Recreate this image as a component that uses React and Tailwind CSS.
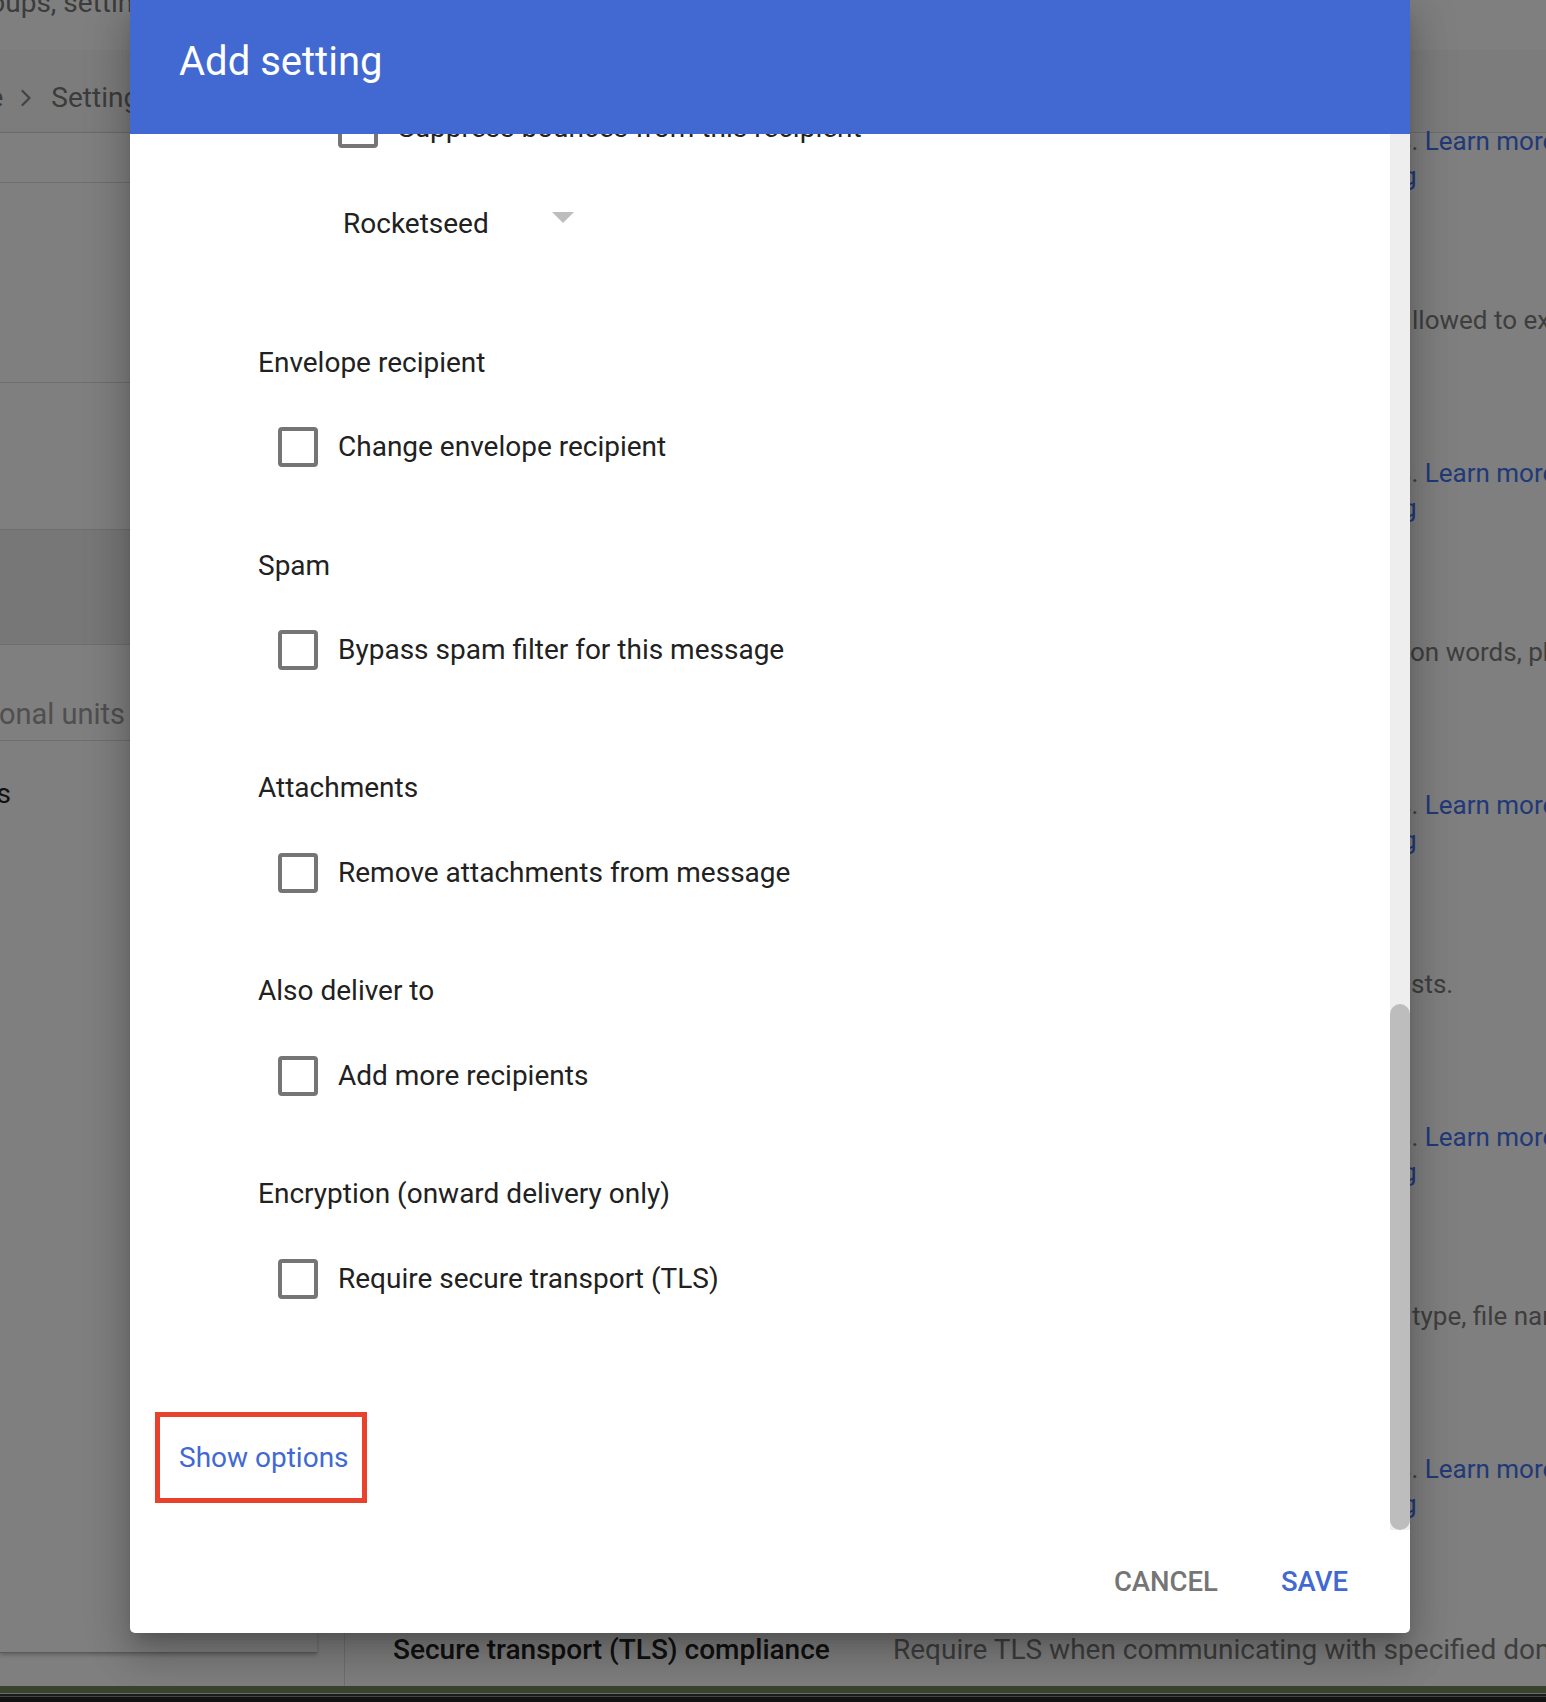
import React from 'react';
import { ChevronRight } from 'lucide-react';

// Sections of the "Add setting" dialog, below the routing dropdown
const sections = [
  { title: 'Envelope recipient', label: 'Change envelope recipient', titleGap: 'mt-[99px]', rowGap: 'mt-[44px]' },
  { title: 'Spam', label: 'Bypass spam filter for this message', titleGap: 'mt-[79px]', rowGap: 'mt-[44px]' },
  { title: 'Attachments', label: 'Remove attachments from message', titleGap: 'mt-[98px]', rowGap: 'mt-[45px]' },
  { title: 'Also deliver to', label: 'Add more recipients', titleGap: 'mt-[78px]', rowGap: 'mt-[45px]' },
  { title: 'Encryption (onward delivery only)', label: 'Require secure transport (TLS)', titleGap: 'mt-[78px]', rowGap: 'mt-[45px]' },
];

// Fragments of the settings list that peek out right of the dialog
const rightFragments = [
  { desc: 'llowed to exchange', descClass: 'ml-[2px]' },
  { desc: 'on words, phrases', descClass: 'ml-0' },
  { desc: 'sts.', descClass: 'ml-[1px]' },
  { desc: 'type, file name', descClass: 'ml-[2px]' },
  { desc: null, descClass: '' },
];

function Checkbox() {
  return <span className="w-10 h-10 shrink-0 rounded-[4px] border-4 border-[#757575] bg-white" />;
}

function CheckRow({ label, className }) {
  return (
    <div className={`h-10 flex items-center gap-5 ${className}`}>
      <Checkbox />
      <span className="text-[28px] leading-10 text-[#212121] whitespace-nowrap">{label}</span>
    </div>
  );
}

function Sidebar() {
  return (
    <div className="w-[345px] shrink-0 border-r border-[#dedede]">
      <div className="w-[317px] h-[1520px] bg-white border-b border-[#b5b5b5] shadow-[0_2px_4px_rgba(0,0,0,0.25)] flex flex-col">
        <div className="h-[50px] border-b border-[#dcdcdc]" />
        <div className="h-[200px] border-b border-[#dcdcdc]" />
        <div className="h-[147px] border-b border-[#dcdcdc]" />
        <div className="h-[115px] border-b border-[#dcdcdc] bg-[#efefef]" />
        <div className="h-[96px] border-b border-[#dcdcdc] flex items-end pb-[8px]">
          <div className="w-[125px] flex justify-end">
            <span className="text-[29px] leading-9 text-[#9e9e9e] whitespace-nowrap">Organizational units</span>
          </div>
        </div>
        <div className="pt-[35px]">
          <div className="w-[11px] flex justify-end">
            <span className="text-[28px] leading-9 text-[#222222] whitespace-nowrap">Apps</span>
          </div>
        </div>
      </div>
    </div>
  );
}

function MainList() {
  return (
    <div className="flex-1 min-w-0 flex flex-col">
      <div className="h-[1499px] shrink-0 flex">
        <div className="flex-1" />
        <div className="w-[136px] shrink-0 flex flex-col -mt-[9px] text-[26px] leading-[35px] whitespace-nowrap">
          {rightFragments.map((f, i) => (
            <div key={i} className="h-[332px] shrink-0 flex flex-col">
              <div className="text-[#4272f0]">
                <span className="-ml-[12px] text-[#7c7c7c]">s.</span> Learn more
              </div>
              <div className="text-[#4272f0]">
                <span className="-ml-[8px]">g</span>
              </div>
              {f.desc && <div className={`mt-[109px] text-[#7c7c7c] ${f.descClass}`}>{f.desc}</div>}
            </div>
          ))}
        </div>
      </div>
      <div className="h-9 shrink-0 flex items-center text-[28px] leading-9 whitespace-nowrap">
        <span className="ml-[48px] w-[500px] shrink-0 font-medium text-[#222222]">Secure transport (TLS) compliance</span>
        <span className="text-[#7c7c7c]">Require TLS when communicating with specified domains.</span>
      </div>
    </div>
  );
}

function BackgroundPage() {
  return (
    <div className="flex flex-col h-full">
      <div className="h-[50px] shrink-0">
        <div className="-mt-[17px] -ml-[39px] text-[28px] leading-10 text-[#787878] whitespace-nowrap">
          Groups, settings and devices
        </div>
      </div>
      <div className="h-[83px] shrink-0 border-b border-[#dcdcdc] bg-[#f8f8f8] pt-[28px]">
        <div className="h-10 flex items-center text-[28px] text-[#787878] whitespace-nowrap">
          <span className="-ml-[72px]">Home</span>
          <ChevronRight size={28} strokeWidth={2} className="ml-[9px] text-[#888888]" />
          <span className="ml-[11px]">Settings for Gmail</span>
        </div>
      </div>
      <div className="flex flex-1 min-h-0">
        <Sidebar />
        <MainList />
      </div>
    </div>
  );
}

function AddSettingDialog() {
  return (
    <div className="absolute left-[130px] top-0 w-[1280px] h-[1633px] bg-white rounded-b-[5px] overflow-hidden flex flex-col shadow-[0_11px_15px_-7px_rgba(0,0,0,0.2),0_24px_38px_3px_rgba(0,0,0,0.14),0_9px_46px_8px_rgba(0,0,0,0.12)]">
      <div className="h-[134px] shrink-0 bg-[#4169d1] pl-[49px] pt-[42px]">
        <h2 className="text-[40px] leading-10 font-normal text-white">Add setting</h2>
      </div>

      <div className="flex flex-1 min-h-0">
        <div className="flex-1 min-w-0 overflow-hidden flex flex-col">
          <CheckRow label="Suppress bounces from this recipient" className="-mt-[26px] ml-[208px]" />

          <div className="h-10 mt-[56px] ml-[213px] flex items-center">
            <span className="w-[209px] text-[28px] leading-10 text-[#212121]">Rocketseed</span>
            <span className="w-0 h-0 mb-[13px] border-l-[11.5px] border-r-[11.5px] border-t-[11px] border-l-transparent border-r-transparent border-t-[#bdbdbd]" />
          </div>

          {sections.map((s) => (
            <React.Fragment key={s.title}>
              <div className={`h-10 flex items-center ml-[128px] text-[28px] text-[#212121] whitespace-nowrap ${s.titleGap}`}>
                {s.title}
              </div>
              <CheckRow label={s.label} className={`ml-[148px] ${s.rowGap}`} />
            </React.Fragment>
          ))}

          <div className="mt-[113px] ml-[25px] w-[212px] h-[91px] shrink-0 border-[5px] border-[#e8412c] flex items-center pl-[19px]">
            <button className="text-[28px] leading-10 text-[#4169d1] whitespace-nowrap">Show options</button>
          </div>
        </div>

        <div className="w-5 shrink-0 bg-[#eeeeee] flex flex-col">
          <div className="mt-[870px] h-[526px] rounded-full bg-[#bdbdbd]" />
        </div>
      </div>

      <div className="h-[103px] shrink-0 flex items-center justify-end gap-[63px] pr-[62px] text-[27.5px] leading-10 font-medium">
        <button className="text-[#757575]">CANCEL</button>
        <button className="text-[#4169d1]">SAVE</button>
      </div>
    </div>
  );
}

function ScreenEdge() {
  return (
    <div className="flex-1 flex flex-col">
      <div className="h-[7px] bg-[#39412f]" />
      <div className="h-px bg-[#6c6c6c]" />
      <div className="h-[2px] bg-[#1a1a1a]" />
      <div className="h-px bg-[#444444]" />
      <div className="flex-1 bg-[#121212]" />
    </div>
  );
}

export default function App() {
  return (
    <div className="w-[1546px] h-[1702px] overflow-hidden flex flex-col bg-[#121212] font-['Roboto',sans-serif]">
      <div className="relative h-[1686px] shrink-0 overflow-hidden bg-white">
        <BackgroundPage />
        <div className="absolute inset-0 bg-black/50" />
        <AddSettingDialog />
      </div>
      <ScreenEdge />
    </div>
  );
}
